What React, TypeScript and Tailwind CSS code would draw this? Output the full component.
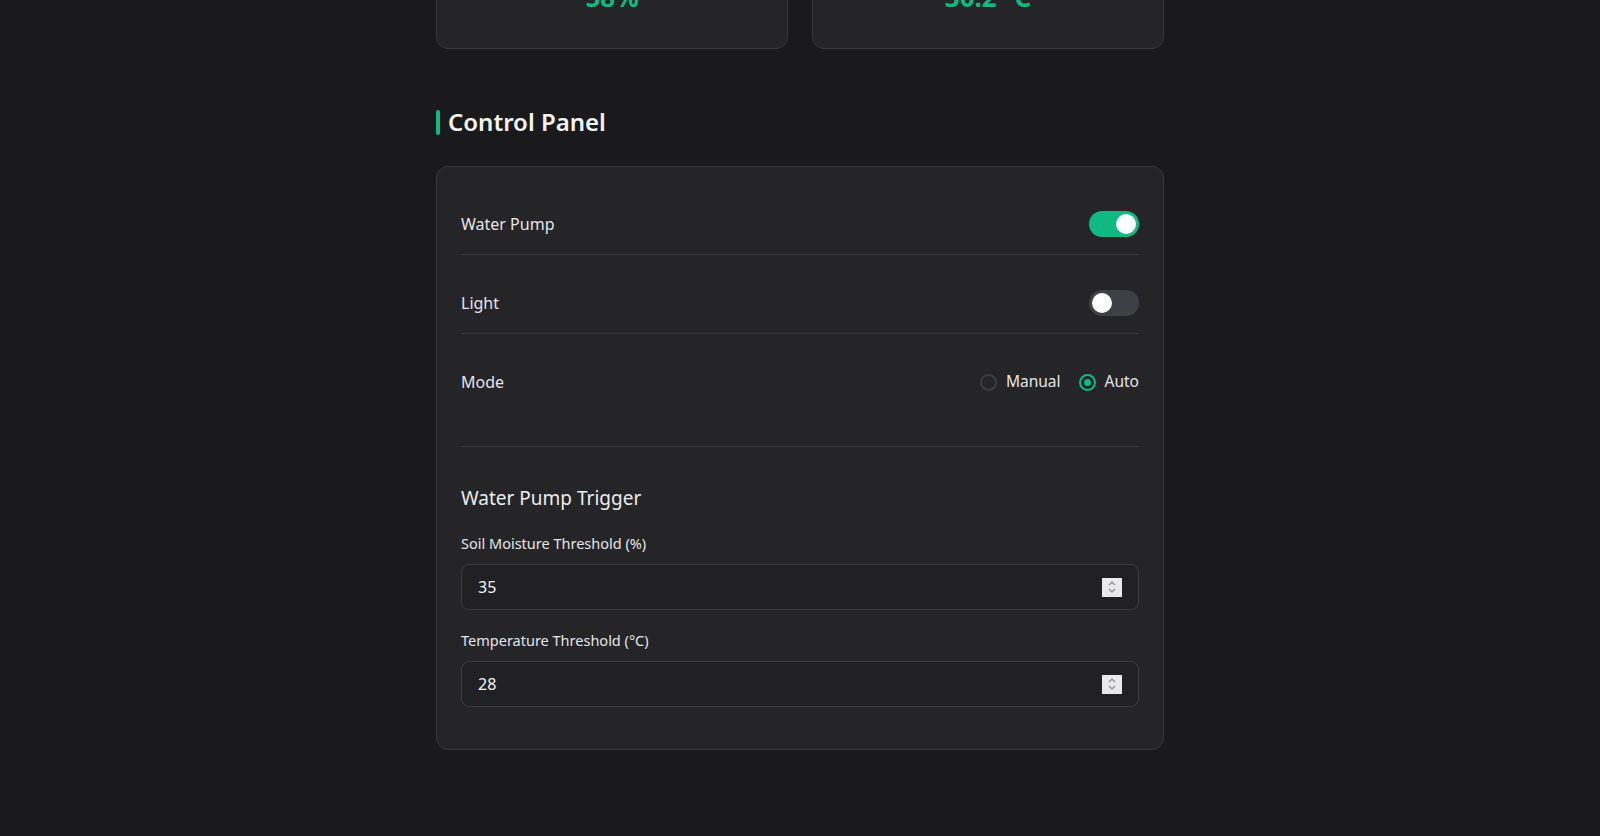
import { useState } from 'react';

const sensors = [
  { id: 'soil', label: 'Soil Moisture', value: '58%' },
  { id: 'temp', label: 'Temperature', value: '30.2 °C' },
];

const Toggle = ({ on, onClick }: { on: boolean; onClick: () => void }) => (
  <button
    onClick={onClick}
    className={`flex h-[26px] w-[50px] items-center rounded-full p-[3px] transition ${
      on ? 'justify-end bg-[#10b981]' : 'justify-start bg-[#3f3f46]'
    }`}
  >
    <span className="block h-5 w-5 rounded-full bg-white" />
  </button>
);

const Radio = ({ checked, label, onClick }: { checked: boolean; label: string; onClick: () => void }) => (
  <label onClick={onClick} className="flex cursor-pointer items-center gap-[9px]">
    <span
      className={`flex h-[17px] w-[17px] items-center justify-center rounded-full border-2 ${
        checked ? 'border-[#10b981]' : 'border-[#3c3c41]'
      }`}
    >
      {checked && <span className="block h-[7px] w-[7px] rounded-full bg-[#10b981]" />}
    </span>
    <span className="text-[15.5px] text-[#e4e4e7]">{label}</span>
  </label>
);

const NumberField = ({ label, value, className = '' }: { label: string; value: number; className?: string }) => (
  <div className={className}>
    <label className="mb-[10px] block text-[14.5px] leading-[22px] text-[#e4e4e7]">{label}</label>
    <div className="flex h-[46px] items-center rounded-lg border border-[#3a3a3f] bg-[#212124] px-4">
      <input
        defaultValue={value}
        className="w-full bg-transparent text-[16px] text-[#f4f4f5] outline-none"
      />
      {/* spinner */}
      <div className="flex h-[19px] w-5 shrink-0 flex-col items-center justify-center bg-[#e9e9ed]">
        <svg width="8" height="5" viewBox="0 0 8 5" className="mb-[2px]">
          <path d="M1 4 L4 1 L7 4" fill="none" stroke="#8a8a8f" strokeWidth="1.2" />
        </svg>
        <svg width="8" height="5" viewBox="0 0 8 5">
          <path d="M1 1 L4 4 L7 1" fill="none" stroke="#8a8a8f" strokeWidth="1.2" />
        </svg>
      </div>
    </div>
  </div>
);

export default function App() {
  const [pump, setPump] = useState(true);
  const [light, setLight] = useState(false);
  const [mode, setMode] = useState<'manual' | 'auto'>('auto');

  return (
    <div className="min-h-screen overflow-hidden bg-[#1a1a1c] font-['Noto_Sans',sans-serif] text-[#e4e4e7]">
      <div className="mx-auto w-[728px] pb-10">
        {/* sensor cards (scrolled partly out of view) */}
        <div className="-mt-[72px] grid grid-cols-2 gap-6">
          {sensors.map((s) => (
            <div
              key={s.id}
              className="rounded-xl border border-[#36363b] bg-[#252528] px-6 pt-6 pb-[35px] text-center"
            >
              <p className="text-sm leading-5 text-[#a1a1aa]">{s.label}</p>
              <p className="mt-2 text-[26px] font-bold leading-8 text-[#10b981]">{s.value}</p>
            </div>
          ))}
        </div>

        {/* heading */}
        <div className="mt-[57px] mb-[28px] flex items-center gap-2">
          <span className="block h-[25px] w-1 rounded-full bg-[#10b981]" />
          <h2 className="text-[24px] font-semibold leading-8 text-[#f4f4f5]">Control Panel</h2>
        </div>

        {/* panel */}
        <div className="rounded-xl border border-[#36363b] bg-[#252528] px-6 pt-[27px] pb-[42px]">
          <div className="flex flex-col gap-[18px]">
            <div className="box-content flex min-h-[28px] items-center justify-between border-b border-[#38383d] py-4">
              <span className="text-[16px]">Water Pump</span>
              <Toggle on={pump} onClick={() => setPump(!pump)} />
            </div>
            <div className="box-content flex min-h-[28px] items-center justify-between border-b border-[#38383d] py-4">
              <span className="text-[16px]">Light</span>
              <Toggle on={light} onClick={() => setLight(!light)} />
            </div>
            <div className="box-content flex min-h-[28px] items-center justify-between py-4">
              <span className="text-[16px]">Mode</span>
              <div className="flex items-center gap-[18px]">
                <Radio label="Manual" checked={mode === 'manual'} onClick={() => setMode('manual')} />
                <Radio label="Auto" checked={mode === 'auto'} onClick={() => setMode('auto')} />
              </div>
            </div>
          </div>

          <div className="mt-[34px] border-t border-[#38383d] pt-[37px]">
            <h3 className="mb-5 text-[19px] leading-7 text-[#ececef]">Water Pump Trigger</h3>
            <NumberField label="Soil Moisture Threshold (%)" value={35} />
            <NumberField label="Temperature Threshold (°C)" value={28} className="mt-[19px]" />
          </div>
        </div>
      </div>
    </div>
  );
}
